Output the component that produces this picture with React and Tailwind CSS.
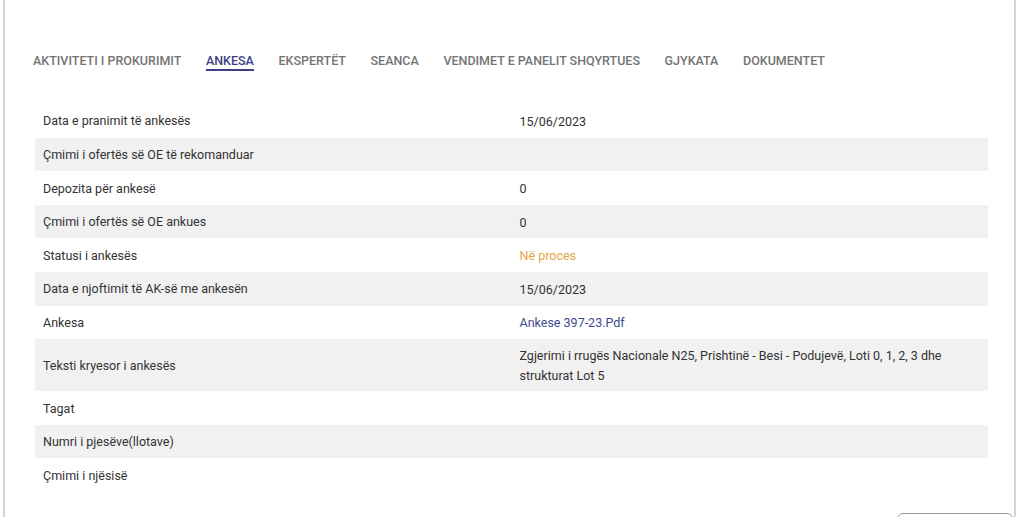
import React from "react";

const rows = [
  { label: "Data e pranimit të ankesës", value: "15/06/2023" },
  { label: "Çmimi i ofertës së OE të rekomanduar", value: "" },
  { label: "Depozita për ankesë", value: "0" },
  { label: "Çmimi i ofertës së OE ankues", value: "0" },
  { label: "Statusi i ankesës", value: "Në proces", kind: "status" },
  { label: "Data e njoftimit të AK-së me ankesën", value: "15/06/2023" },
  { label: "Ankesa", value: "Ankese 397-23.Pdf", kind: "link" },
  {
    label: "Teksti kryesor i ankesës",
    kind: "multi",
    value: (
      <>
        Zgjerimi i rrugës Nacionale N25, Prishtinë - Besi - Podujevë, Loti 0, 1, 2, 3 dhe
        <br />
        strukturat Lot 5
      </>
    ),
  },
  { label: "Tagat", value: "" },
  { label: "Numri i pjesëve(llotave)", value: "" },
  { label: "Çmimi i njësisë", value: "" },
];

const tabs = [
  "AKTIVITETI I PROKURIMIT",
  "ANKESA",
  "EKSPERTËT",
  "SEANCA",
  "VENDIMET E PANELIT SHQYRTUES",
  "GJYKATA",
  "DOKUMENTET",
];

export default function App() {
  return (
    <div
      className="w-[1024px] h-[517px] overflow-hidden bg-white"
      style={{ fontFamily: "Roboto, 'Liberation Sans', sans-serif" }}
    >
      <div className="ml-[3px] w-[1013px] h-[540px] border-x-2 border-[#d4d4d4] bg-white">
        <div className="flex gap-[24.6px] pl-[28px] pt-[51px] text-[12.5px] font-medium leading-[20px] text-[#747474]">
          {tabs.map((t) => (
            <span
              key={t}
              className={
                t === "ANKESA"
                  ? "text-[#3d3f86] underline decoration-2 underline-offset-[4px]"
                  : ""
              }
            >
              {t}
            </span>
          ))}
        </div>
        <div className="ml-[30px] mr-[26px] mt-[33px] text-[12.5px] text-[#333333]">
          {rows.map((r, i) => (
            <div
              key={i}
              className={`flex ${r.kind === "multi" ? "min-h-[52px]" : "h-[33.6px]"} items-center pt-[2px] ${
                i % 2 === 1 ? "bg-[#f1f1f1]" : ""
              }`}
            >
              <div className="w-1/2 px-[8px]">{r.label}</div>
              <div
                className={`w-1/2 px-[8px] leading-[20px] ${
                  r.kind === "status"
                    ? "text-[#e6a545]"
                    : r.kind === "link"
                    ? "text-[#3e4a8e]"
                    : ""
                }`}
              >
                {r.value}
              </div>
            </div>
          ))}
        </div>
        <div className="flex justify-end pr-[1px] mt-[21px]">
          <button className="w-[116px] h-[30px] rounded-[6px] border border-[#9a9a9a] bg-white"></button>
        </div>
      </div>
    </div>
  );
}
